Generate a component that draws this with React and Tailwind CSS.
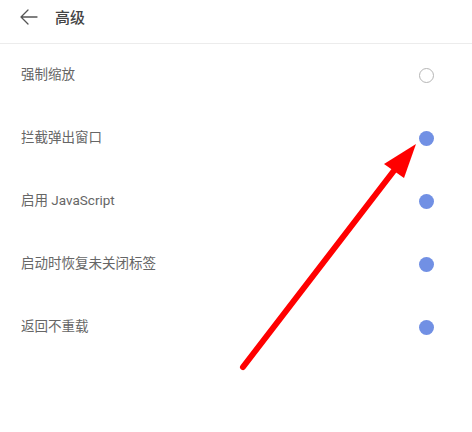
import React from 'react';

const items = [
  { label: '强制缩放', on: false },
  { label: '拦截弹出窗口', on: true },
  { label: '启用 JavaScript', on: true },
  { label: '启动时恢复未关闭标签', on: true },
  { label: '返回不重载', on: true },
];

export default function App() {
  return (
    <div
      className="relative w-[472px] h-[432px] bg-white overflow-hidden"
      style={{ fontFamily: 'Roboto, "Noto Sans CJK SC", sans-serif' }}
    >
      {/* Header */}
      <div className="flex items-center h-[44px] pb-[9px] border-b border-[#ececec]">
        <svg className="ml-[20px]" width="18" height="16" viewBox="0 0 18 16" fill="none">
          <path d="M8 1 L1 8 L8 15 M1 8 H17" stroke="#555" strokeWidth="1.3" strokeLinecap="round" strokeLinejoin="round" />
        </svg>
        <span className="ml-[17px] mt-[2px] text-[15px] text-[#444] font-medium leading-none">高级</span>
      </div>

      {/* Settings list */}
      <div className="flex flex-col">
        {items.map((item) => (
          <div key={item.label} className="flex items-center justify-between h-[63px] pl-[21px] pr-[38px]">
            <span className="text-[13.5px] text-[#666] -mt-[2px]">{item.label}</span>
            {item.on ? (
              <span className="w-[15px] h-[15px] rounded-full bg-[#7190e4]" />
            ) : (
              <span className="w-[15px] h-[15px] rounded-full border-[1.5px] border-[#b5b5b5]" />
            )}
          </div>
        ))}
      </div>

      {/* Red annotation arrow */}
      <svg className="absolute inset-0 pointer-events-none" width="472" height="432">
        <line x1="243" y1="367" x2="396" y2="168" stroke="#ff0000" strokeWidth="6" strokeLinecap="round" />
        <polygon points="416,144 384,164 404,178" fill="#ff0000" />
      </svg>
    </div>
  );
}
